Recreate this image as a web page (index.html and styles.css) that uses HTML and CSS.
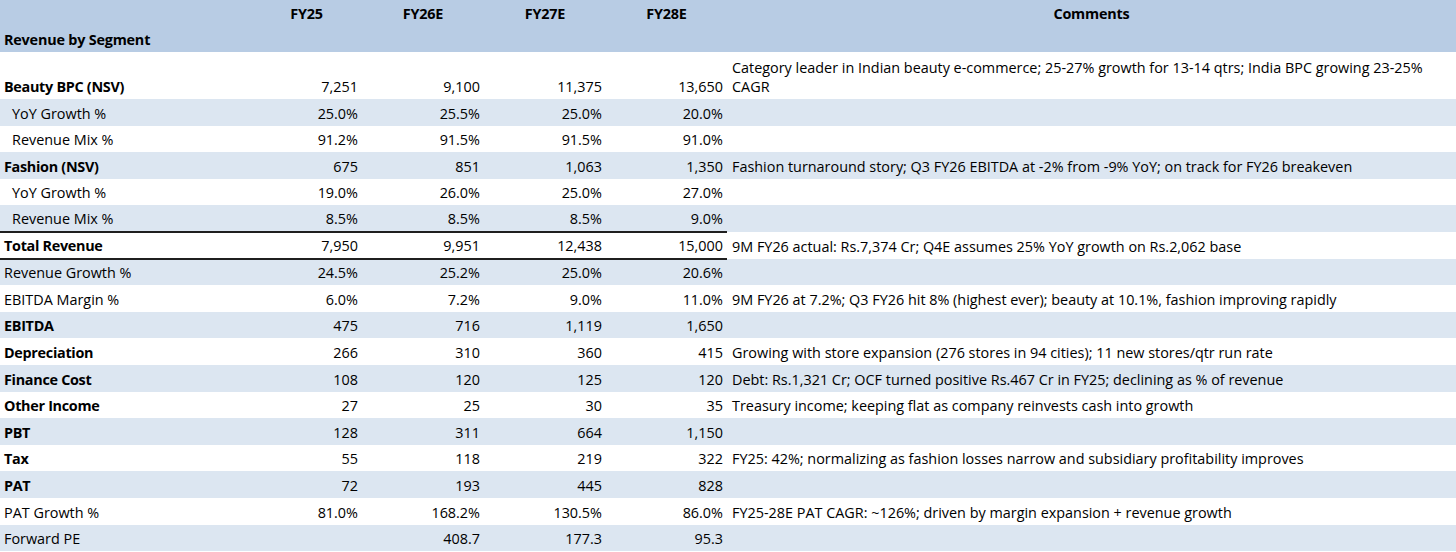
FILE: index.html
```html
<!DOCTYPE html>
<html lang="en">
<head>
<meta charset="utf-8">
<title>Revenue by Segment</title>
<link rel="stylesheet" href="styles.css">
</head>
<body>
<table class="model">
  <colgroup>
    <col class="c-label">
    <col class="c-num">
    <col class="c-num2">
    <col class="c-num2">
    <col class="c-num3">
    <col class="c-comment">
  </colgroup>
  <thead>
    <tr class="head-top">
      <th></th>
      <th class="hcol">FY25</th>
      <th class="hcol">FY26E</th>
      <th class="hcol">FY27E</th>
      <th class="hcol">FY28E</th>
      <th class="hcol">Comments</th>
    </tr>
    <tr class="head-sub">
      <th class="hlabel">Revenue by Segment</th>
      <th></th><th></th><th></th><th></th><th></th>
    </tr>
  </thead>
  <tbody>
    <tr class="tall">
      <td class="lbl b">Beauty BPC (NSV)</td>
      <td class="num">7,251</td><td class="num">9,100</td><td class="num">11,375</td><td class="num">13,650</td>
      <td class="cmt">Category leader in Indian beauty e-commerce; 25-27% growth for 13-14 qtrs; India BPC growing 23-25% CAGR</td>
    </tr>
    <tr class="band">
      <td class="lbl ind">YoY Growth %</td>
      <td class="num">25.0%</td><td class="num">25.5%</td><td class="num">25.0%</td><td class="num">20.0%</td>
      <td class="cmt"></td>
    </tr>
    <tr>
      <td class="lbl ind">Revenue Mix %</td>
      <td class="num">91.2%</td><td class="num">91.5%</td><td class="num">91.5%</td><td class="num">91.0%</td>
      <td class="cmt"></td>
    </tr>
    <tr class="band">
      <td class="lbl b">Fashion (NSV)</td>
      <td class="num">675</td><td class="num">851</td><td class="num">1,063</td><td class="num">1,350</td>
      <td class="cmt">Fashion turnaround story; Q3 FY26 EBITDA at -2% from -9% YoY; on track for FY26 breakeven</td>
    </tr>
    <tr>
      <td class="lbl ind">YoY Growth %</td>
      <td class="num">19.0%</td><td class="num">26.0%</td><td class="num">25.0%</td><td class="num">27.0%</td>
      <td class="cmt"></td>
    </tr>
    <tr class="band">
      <td class="lbl ind">Revenue Mix %</td>
      <td class="num">8.5%</td><td class="num">8.5%</td><td class="num">8.5%</td><td class="num">9.0%</td>
      <td class="cmt"></td>
    </tr>
    <tr class="total">
      <td class="lbl b">Total Revenue</td>
      <td class="num">7,950</td><td class="num">9,951</td><td class="num">12,438</td><td class="num">15,000</td>
      <td class="cmt">9M FY26 actual: Rs.7,374 Cr; Q4E assumes 25% YoY growth on Rs.2,062 base</td>
    </tr>
    <tr class="band">
      <td class="lbl">Revenue Growth %</td>
      <td class="num">24.5%</td><td class="num">25.2%</td><td class="num">25.0%</td><td class="num">20.6%</td>
      <td class="cmt"></td>
    </tr>
    <tr>
      <td class="lbl">EBITDA Margin %</td>
      <td class="num">6.0%</td><td class="num">7.2%</td><td class="num">9.0%</td><td class="num">11.0%</td>
      <td class="cmt">9M FY26 at 7.2%; Q3 FY26 hit 8% (highest ever); beauty at 10.1%, fashion improving rapidly</td>
    </tr>
    <tr class="band">
      <td class="lbl b">EBITDA</td>
      <td class="num">475</td><td class="num">716</td><td class="num">1,119</td><td class="num">1,650</td>
      <td class="cmt"></td>
    </tr>
    <tr>
      <td class="lbl b">Depreciation</td>
      <td class="num">266</td><td class="num">310</td><td class="num">360</td><td class="num">415</td>
      <td class="cmt">Growing with store expansion (276 stores in 94 cities); 11 new stores/qtr run rate</td>
    </tr>
    <tr class="band">
      <td class="lbl b">Finance Cost</td>
      <td class="num">108</td><td class="num">120</td><td class="num">125</td><td class="num">120</td>
      <td class="cmt">Debt: Rs.1,321 Cr; OCF turned positive Rs.467 Cr in FY25; declining as % of revenue</td>
    </tr>
    <tr>
      <td class="lbl b">Other Income</td>
      <td class="num">27</td><td class="num">25</td><td class="num">30</td><td class="num">35</td>
      <td class="cmt">Treasury income; keeping flat as company reinvests cash into growth</td>
    </tr>
    <tr class="band">
      <td class="lbl b">PBT</td>
      <td class="num">128</td><td class="num">311</td><td class="num">664</td><td class="num">1,150</td>
      <td class="cmt"></td>
    </tr>
    <tr>
      <td class="lbl b">Tax</td>
      <td class="num">55</td><td class="num">118</td><td class="num">219</td><td class="num">322</td>
      <td class="cmt">FY25: 42%; normalizing as fashion losses narrow and subsidiary profitability improves</td>
    </tr>
    <tr class="band">
      <td class="lbl b">PAT</td>
      <td class="num">72</td><td class="num">193</td><td class="num">445</td><td class="num">828</td>
      <td class="cmt"></td>
    </tr>
    <tr>
      <td class="lbl">PAT Growth %</td>
      <td class="num">81.0%</td><td class="num">168.2%</td><td class="num">130.5%</td><td class="num">86.0%</td>
      <td class="cmt">FY25-28E PAT CAGR: ~126%; driven by margin expansion + revenue growth</td>
    </tr>
    <tr class="band">
      <td class="lbl">Forward PE</td>
      <td class="num"></td><td class="num">408.7</td><td class="num">177.3</td><td class="num">95.3</td>
      <td class="cmt"></td>
    </tr>
  </tbody>
</table>
</body>
</html>
```
FILE: styles.css
```css
html, body {
  margin: 0;
  padding: 0;
  background: #ffffff;
}

body {
  font-family: "Open Sans", "Liberation Sans", sans-serif;
  font-size: 14.4px;
  color: #000000;
  overflow: hidden;
}

.model {
  width: 1456px;
  border-collapse: collapse;
  table-layout: fixed;
}

.c-label { width: 251px; }
.c-num { width: 111px; }
.c-num2 { width: 122px; }
.c-num3 { width: 121px; }
.c-comment { width: 729px; }

.model th,
.model td {
  padding: 0 4px 3px 4px;
  line-height: 19px;
  vertical-align: bottom;
  white-space: nowrap;
  overflow: visible;
}

.head-top,
.head-sub {
  background: #b8cce4;
}

.head-top th,
.head-sub th {
  height: 26px;
  padding: 0 4px;
  vertical-align: middle;
  font-weight: 700;
  letter-spacing: -0.2px;
}

.hcol {
  text-align: center;
}

.hlabel {
  text-align: left;
}

.model tbody tr {
  height: 26.6px;
}

.model tbody tr.tall {
  height: 47px;
}

.band {
  background: #dce6f1;
}

.lbl {
  text-align: left;
  font-weight: 400;
}

.lbl.b {
  font-weight: 700;
  letter-spacing: -0.3px;
}

.lbl.ind {
  padding-left: 12px;
}

.num {
  text-align: right;
}

.model td.cmt {
  padding-left: 5px;
  text-align: left;
  white-space: normal;
}

.total td {
  border-top: 2px solid #1f1f1f;
  border-bottom: 2px solid #1f1f1f;
}

.total td.cmt {
  border-top: none;
  border-bottom: none;
}
```
